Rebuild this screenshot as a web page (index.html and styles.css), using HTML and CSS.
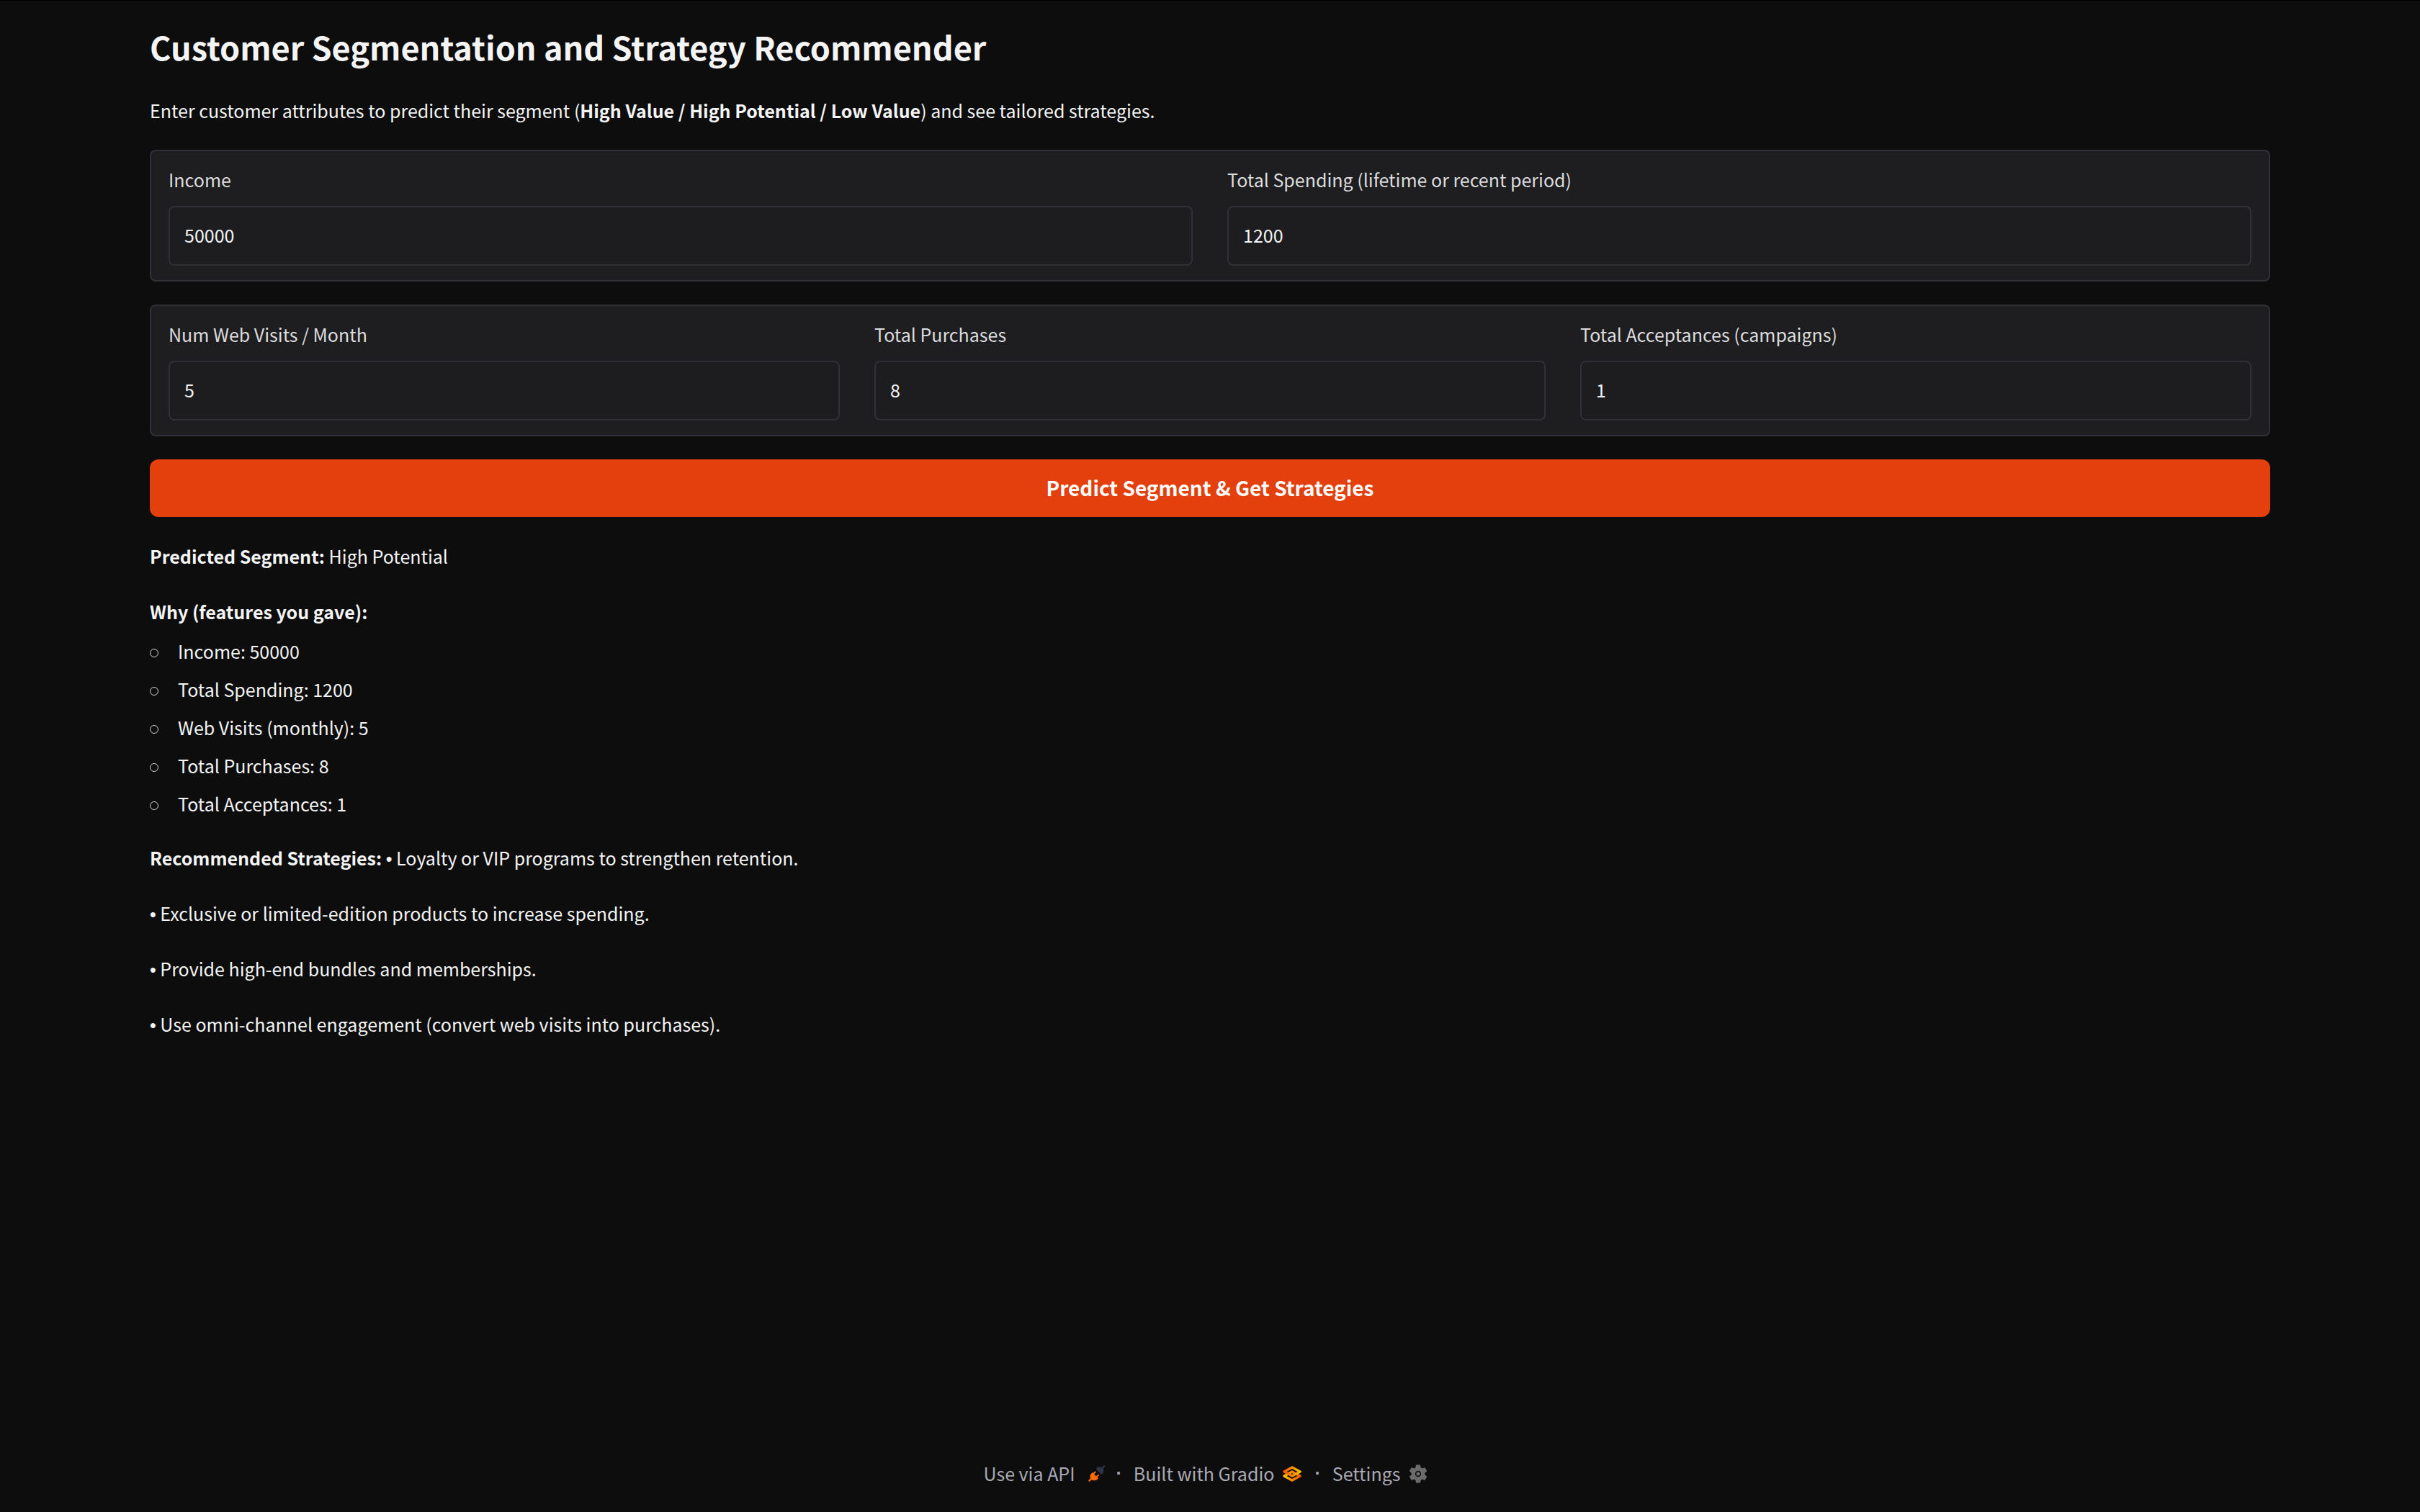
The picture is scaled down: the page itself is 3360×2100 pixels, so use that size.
FILE: index.html
```html
<!DOCTYPE html>
<html lang="en">
<head>
<meta charset="utf-8">
<meta name="viewport" content="width=device-width, initial-scale=1">
<title>Customer Segmentation and Strategy Recommender</title>
<link rel="stylesheet" href="styles.css">
</head>
<body>
<div class="app">
  <main class="content">
    <header class="intro">
      <h1 class="title">Customer Segmentation and Strategy Recommender</h1>
      <p class="text">Enter customer attributes to predict their segment (<strong>High Value / High Potential / Low Value</strong>) and see tailored strategies.</p>
    </header>
    <form class="form" onsubmit="return false">
      <div class="panel">
        <label class="field"><span class="label">Income</span><input class="input" type="number" value="50000"></label>
        <label class="field"><span class="label">Total Spending (lifetime or recent period)</span><input class="input" type="number" value="1200"></label>
      </div>
      <div class="panel">
        <label class="field"><span class="label">Num Web Visits / Month</span><input class="input" type="number" value="5"></label>
        <label class="field"><span class="label">Total Purchases</span><input class="input" type="number" value="8"></label>
        <label class="field"><span class="label">Total Acceptances (campaigns)</span><input class="input" type="number" value="1"></label>
      </div>
      <button class="submit" type="submit">Predict Segment &amp; Get Strategies</button>
    </form>
    <section class="result">
      <p class="text"><strong>Predicted Segment:</strong> High Potential</p>
      <div class="why">
        <p class="text"><strong>Why (features you gave):</strong></p>
        <ul class="features">
          <li class="feature">Income: 50000</li>
          <li class="feature">Total Spending: 1200</li>
          <li class="feature">Web Visits (monthly): 5</li>
          <li class="feature">Total Purchases: 8</li>
          <li class="feature">Total Acceptances: 1</li>
        </ul>
      </div>
      <div class="strategies">
        <p class="text"><strong>Recommended Strategies:</strong> <span class="bullet">•</span> Loyalty or VIP programs to strengthen retention.</p>
        <p class="text"><span class="bullet">•</span> Exclusive or limited-edition products to increase spending.</p>
        <p class="text"><span class="bullet">•</span> Provide high-end bundles and memberships.</p>
        <p class="text"><span class="bullet">•</span> Use omni-channel engagement (convert web visits into purchases).</p>
      </div>
    </section>
  </main>
  <footer class="footer">
    <button class="link api" type="button">Use via API
      <svg class="plug" viewBox="0 0 24 24" aria-hidden="true">
        <path d="M1.500 22.500 L5 19" stroke="#ff6a08" stroke-width="2.400" stroke-linecap="round"/>
        <path d="M6 10.500 L14.500 19 L12.500 21 Q8 23.500 4 20.500 Q1 16.500 4 12.500 Z" fill="#ff6a08"/>
        <path d="M7.500 12.500 L10 10 M12 17 L14.500 14.500" stroke="#ff6a08" stroke-width="2.200" stroke-linecap="round"/>
        <path d="M11 5.500 L19 13.500 L21 11.500 Q24 8 21 4 Q17 1 13 3.500 Z" fill="#2d3444"/>
        <path d="M20 4.500 L23 1.500" stroke="#2d3444" stroke-width="2.400" stroke-linecap="round"/>
      </svg>
    </button>
    <span class="dot">·</span>
    <a class="link" href="#gradio">Built with Gradio
      <svg class="logo" viewBox="0 0 26 22" aria-hidden="true">
        <defs>
          <linearGradient id="up" x1="0" y1="0" x2="1" y2="0"><stop offset="0" stop-color="#ff5a00"/><stop offset="1" stop-color="#ffc000"/></linearGradient>
          <linearGradient id="down" x1="0" y1="0" x2="1" y2="0"><stop offset="0" stop-color="#ffc000"/><stop offset="1" stop-color="#ff5a00"/></linearGradient>
        </defs>
        <path d="M2 14 L13 8 L17 10.500 M2 14 L13 20 L24 14 L20 12" fill="none" stroke="url(#down)" stroke-width="3.400" stroke-linejoin="round" stroke-linecap="round"/>
        <path d="M24 8 L13 14 L9 11.500 M24 8 L13 2 L2 8 L6 10" fill="none" stroke="url(#up)" stroke-width="3.400" stroke-linejoin="round" stroke-linecap="round"/>
      </svg>
    </a>
    <span class="dot">·</span>
    <button class="link settings" type="button">Settings
      <svg class="gear" viewBox="2 2 20 20" aria-hidden="true">
        <path fill="#6b6b6b" d="M19.140 12.940c.04-.3.060-.61.060-.94s-.02-.64-.07-.94l2.030-1.580a.49.490 0 0 0 .12-.61l-1.920-3.320a.49.490 0 0 0-.59-.22l-2.390.960a7 7 0 0 0-1.620-.94l-.36-2.540a.48.480 0 0 0-.48-.41h-3.840a.48.480 0 0 0-.47.410l-.36 2.540a7 7 0 0 0-1.620.940l-2.390-.96a.48.480 0 0 0-.59.220L2.740 8.870a.48.480 0 0 0 .12.610l2.030 1.580a6 6 0 0 0 0 1.880l-2.030 1.580a.49.490 0 0 0-.12.610l1.920 3.320c.12.220.37.290.59.220l2.390-.96c.5.380 1.030.7 1.620.940l.36 2.540c.05.240.24.410.48.410h3.840c.24 0 .44-.17.470-.41l.36-2.540a7 7 0 0 0 1.620-.94l2.390.960c.22.080.47 0 .59-.22l1.920-3.320a.48.480 0 0 0-.12-.61z"/>
        <circle cx="12" cy="12" r="2.600" fill="none" stroke="#0d0d0d" stroke-width="1.200"/>
      </svg>
    </button>
  </footer>
</div>
</body>
</html>
```
FILE: styles.css
```css
* {
  box-sizing: border-box;
}

body {
  margin: 0;
  background: #0d0d0d;
  color: #f4f4f5;
  font: 25px/45px "Noto Sans CJK SC", "Noto Sans", sans-serif;
}

body::before {
  content: "";
  position: absolute;
  top: 0;
  left: 0;
  right: 0;
  height: 1px;
  background: #000;
}

.app {
  display: flex;
  flex-direction: column;
  min-height: 100vh;
  max-width: 3072px;
  margin: 0 auto;
  padding: 31px 64px;
}

.content {
  display: flex;
  flex-direction: column;
  flex: 1;
}

.title {
  margin: 0 0 33px;
  font-size: 45px;
  line-height: 67px;
  font-weight: 600;
}

.text {
  margin: 0;
}

strong {
  font-weight: 600;
}

.form {
  display: flex;
  flex-direction: column;
  gap: 32px;
  margin: 32px 0;
}

.panel {
  display: flex;
  gap: 48px;
  padding: 20px 24px;
  border: 2px solid #303036;
  border-radius: 8px;
  background: #1e1e20;
}

.field {
  display: flex;
  flex: 1;
  flex-direction: column;
  gap: 18px;
  min-width: 0;
}

.label {
  color: #dcdcde;
  line-height: 38px;
}

.input {
  width: 100%;
  height: 83px;
  padding: 18px 20px 21px;
  border: 2px solid #303036;
  border-radius: 8px;
  background: #1d1d1f;
  color: inherit;
  font: inherit;
  appearance: textfield;
}

.submit {
  height: 80px;
  padding: 0 0 2px;
  border: 0;
  border-radius: 12px;
  background: #e3400d;
  color: #fff;
  font: inherit;
  font-size: 28px;
  font-weight: 600;
}

.result {
  display: flex;
  flex-direction: column;
  gap: 30px;
}

.why {
  padding-top: 2px;
}

.strategies {
  display: flex;
  flex-direction: column;
  gap: 32px;
}

.features {
  display: flex;
  flex-direction: column;
  gap: 8px;
  margin: 10px 0 0;
  padding: 0;
  list-style: none;
}

.feature {
  display: flex;
  align-items: center;
  gap: 27px;
}

.feature::before {
  content: "";
  width: 10px;
  height: 10px;
  margin-top: 4px;
  border: 1px solid #d4d4d6;
  border-radius: 50%;
}

.bullet,
.dot {
  font-family: "Liberation Sans", sans-serif;
  font-size: 25px;
  line-height: 25px;
}

.dot {
  font-weight: 700;
}

.footer {
  display: flex;
  align-items: center;
  justify-content: center;
  gap: 16px;
  color: #a9a9b3;
}

.link {
  display: flex;
  align-items: center;
  gap: 12px;
  padding: 0;
  border: 0;
  background: none;
  color: inherit;
  font: inherit;
  text-decoration: none;
}

.api {
  gap: 18px;
}

.settings {
  padding-right: 12px;
}

.plug {
  width: 23px;
  height: 23px;
}

.logo {
  width: 26px;
  height: 22px;
  margin-right: 2px;
}

.gear {
  width: 26px;
  height: 26px;
}
```
